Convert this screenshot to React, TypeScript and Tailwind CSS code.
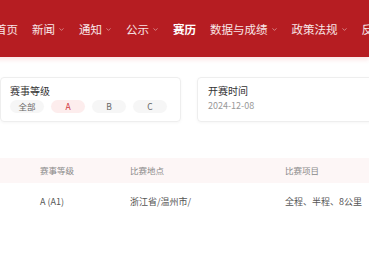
import { ChevronDown } from "lucide-react";

const navItems = [
  { label: "首页", drop: false },
  { label: "新闻", drop: true },
  { label: "通知", drop: true },
  { label: "公示", drop: true },
  { label: "赛历", drop: false, active: true },
  { label: "数据与成绩", drop: true },
  { label: "政策法规", drop: true },
  { label: "反兴奋剂", drop: true },
];

const levels = ["全部", "A", "B", "C"];

export default function App() {
  return (
    <div
      className="w-[369px] h-[277px] overflow-hidden bg-white"
      style={{ fontFamily: '"Noto Sans CJK SC", "Noto Sans", sans-serif' }}
    >
      <nav className="h-[57px] bg-[#b61d22] flex items-center gap-[14px] -ml-[5px] whitespace-nowrap shadow-[0_3px_4px_rgba(220,60,60,0.12)]">
        {navItems.map((item) => (
          <div key={item.label} className="flex items-center shrink-0 pt-[2px]">
            <span
              className={`text-[11.5px] leading-none ${
                item.active ? "font-bold text-white" : "text-white/90"
              }`}
            >
              {item.label}
            </span>
            {item.drop && (
              <ChevronDown className="ml-[3px] w-[7px] h-[7px] text-white/60" strokeWidth={2.5} />
            )}
          </div>
        ))}
      </nav>

      <div className="flex gap-[16px] mt-[20px]">
        <div className="w-[181px] shrink-0 h-[45px] rounded-[4px] border border-[#eeeeee] shadow-[0_1px_3px_rgba(0,0,0,0.04)] px-[9px] pt-[6px]">
          <div className="text-[10px] leading-[14px] text-[#333]">赛事等级</div>
          <div className="flex gap-[7px] mt-[2px]">
            {levels.map((lv) => (
              <span
                key={lv}
                className={`w-[34px] h-[13px] rounded-full flex items-center justify-center text-[8.5px] leading-none ${
                  lv === "A" ? "bg-[#fdeded] text-[#d0343a]" : "bg-[#f6f6f6] text-[#666]"
                }`}
              >
                {lv}
              </span>
            ))}
          </div>
        </div>
        <div className="w-[200px] shrink-0 h-[45px] rounded-[4px] border border-[#eeeeee] shadow-[0_1px_3px_rgba(0,0,0,0.04)] px-[10px] pt-[6px]">
          <div className="text-[10px] leading-[14px] text-[#333]">开赛时间</div>
          <div className="text-[9px] leading-[14px] mt-[1px] text-[#999]">2024-12-08</div>
        </div>
      </div>

      <div className="mt-[36px]">
        <div className="h-[25px] bg-[#fdf6f6] flex items-center text-[8.5px] text-[#8a8a8a]">
          <span className="w-[130px] pl-[40px] shrink-0">赛事等级</span>
          <span className="w-[155px] shrink-0">比赛地点</span>
          <span>比赛项目</span>
        </div>
        <div className="h-[37px] flex items-center text-[9px] text-[#555]">
          <span className="w-[130px] pl-[40px] shrink-0">A (A1)</span>
          <span className="w-[155px] shrink-0">浙江省/温州市/</span>
          <span>全程、半程、8公里</span>
        </div>
      </div>
    </div>
  );
}
